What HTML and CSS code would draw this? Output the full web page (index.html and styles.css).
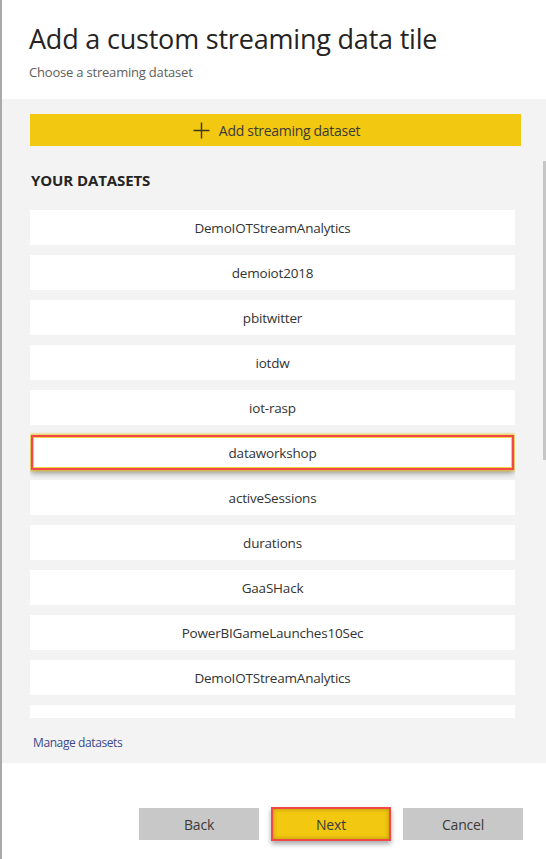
FILE: index.html
```html
<!DOCTYPE html>
<html>
<head>
<meta charset="utf-8">
<link rel="stylesheet" href="styles.css">
</head>
<body>
<div class="dialog">
  <header class="header">
    <h1 class="title">Add a custom streaming data tile</h1>
    <p class="subtitle">Choose a streaming dataset</p>
  </header>
  <section class="panel">
    <button class="add-btn"><svg class="plus" width="17" height="17" viewBox="0 0 17 17"><path d="M8.5 0.5v16M0.5 8.5h16" stroke="#3b3a1c" stroke-width="1.4" fill="none"/></svg><span>Add streaming dataset</span></button>
    <div class="scroll">
      <h2 class="section-title">YOUR DATASETS</h2>
      <ul class="list">
        <li class="item">DemoIOTStreamAnalytics</li>
        <li class="item">demoiot2018</li>
        <li class="item">pbitwitter</li>
        <li class="item">iotdw</li>
        <li class="item">iot-rasp</li>
        <li class="item selected">dataworkshop</li>
        <li class="item">activeSessions</li>
        <li class="item">durations</li>
        <li class="item">GaaSHack</li>
        <li class="item">PowerBIGameLaunches10Sec</li>
        <li class="item">DemoIOTStreamAnalytics</li>
        <li class="item"></li>
      </ul>
      <div class="thumb"></div>
    </div>
    <a class="manage">Manage datasets</a>
  </section>
  <footer class="footer">
    <button class="btn">Back</button>
    <button class="btn primary">Next</button>
    <button class="btn">Cancel</button>
  </footer>
</div>
</body>
</html>
```
FILE: styles.css
```css
html, body {
  margin: 0;
  padding: 0;
  background: #ffffff;
}
body {
  font-family: "Open Sans", "Noto Sans", sans-serif;
  color: #252423;
}
.dialog {
  width: 544px;
  height: 859px;
  border-left: 2px solid #a9a9a9;
  display: flex;
  flex-direction: column;
}
.header {
  height: 99px;
  padding-left: 27px;
  box-sizing: border-box;
  padding-top: 19px;
}
.title {
  margin: 0;
  font-size: 27px;
  font-weight: 400;
  line-height: 40px;
  color: #252423;
  letter-spacing: -0.2px;
}
.subtitle {
  margin: 4px 0 0 0;
  font-size: 13px;
  line-height: 18px;
  color: #605e5c;
  letter-spacing: -0.2px;
}
.panel {
  background: #f3f3f3;
  height: 664px;
  box-sizing: border-box;
  padding: 15px 0 0 28px;
  display: flex;
  flex-direction: column;
  position: relative;
}
.add-btn {
  width: 491px;
  height: 32px;
  border: none;
  background: #f2c811;
  display: flex;
  align-items: center;
  justify-content: center;
  gap: 9px;
  font-family: inherit;
  font-size: 14px;
  color: #3b3a39;
  padding: 0 0 0 2px;
  letter-spacing: -0.3px;
}
.plus { display: block; }
.scroll {
  display: flex;
  flex-direction: column;
}
.section-title {
  margin: 24px 0 20px 1px;
  font-size: 15px;
  line-height: 20px;
  font-weight: 700;
  color: #252423;
  letter-spacing: -0.1px;
}
.list {
  list-style: none;
  margin: 0;
  padding: 0;
  width: 485px;
  height: 508px;
  overflow: hidden;
  display: flex;
  flex-direction: column;
  gap: 10px;
}
.item {
  flex: 0 0 35px;
  height: 35px;
  background: #ffffff;
  display: flex;
  align-items: center;
  justify-content: center;
  font-size: 13.5px;
  color: #333333;
  letter-spacing: -0.2px;
  box-sizing: border-box;
}
.item.selected {
  border: 2px solid #f24848;
  box-shadow: 0 0 2px 1px rgba(242, 200, 17, 0.8), 0 3px 6px rgba(0, 0, 0, 0.4), inset 0 0 0 1px #f2d23a;
  margin: 0 1px;
}
.thumb {
  position: absolute;
  right: 0;
  top: 62px;
  width: 3px;
  height: 299px;
  background: #c6c6c6;
}
.manage {
  margin-top: 17px;
  margin-left: 3px;
  font-size: 12px;
  line-height: 16px;
  color: #3a4a8c;
  letter-spacing: -0.4px;
}
.footer {
  flex: 1;
  display: flex;
  justify-content: flex-end;
  align-items: flex-start;
  gap: 12px;
  padding: 45px 23px 0 0;
}
.btn {
  width: 120px;
  height: 32px;
  border: none;
  background: #c8c8c8;
  font-family: inherit;
  font-size: 14px;
  color: #3b3a39;
  letter-spacing: -0.2px;
}
.btn.primary {
  background: #f2c811;
  border: 2px solid #f24848;
  box-shadow: 0 3px 5px rgba(0, 0, 0, 0.35), inset 0 0 4px rgba(120, 90, 0, 0.5);
  height: 34px;
  margin-top: -1px;
}
```
